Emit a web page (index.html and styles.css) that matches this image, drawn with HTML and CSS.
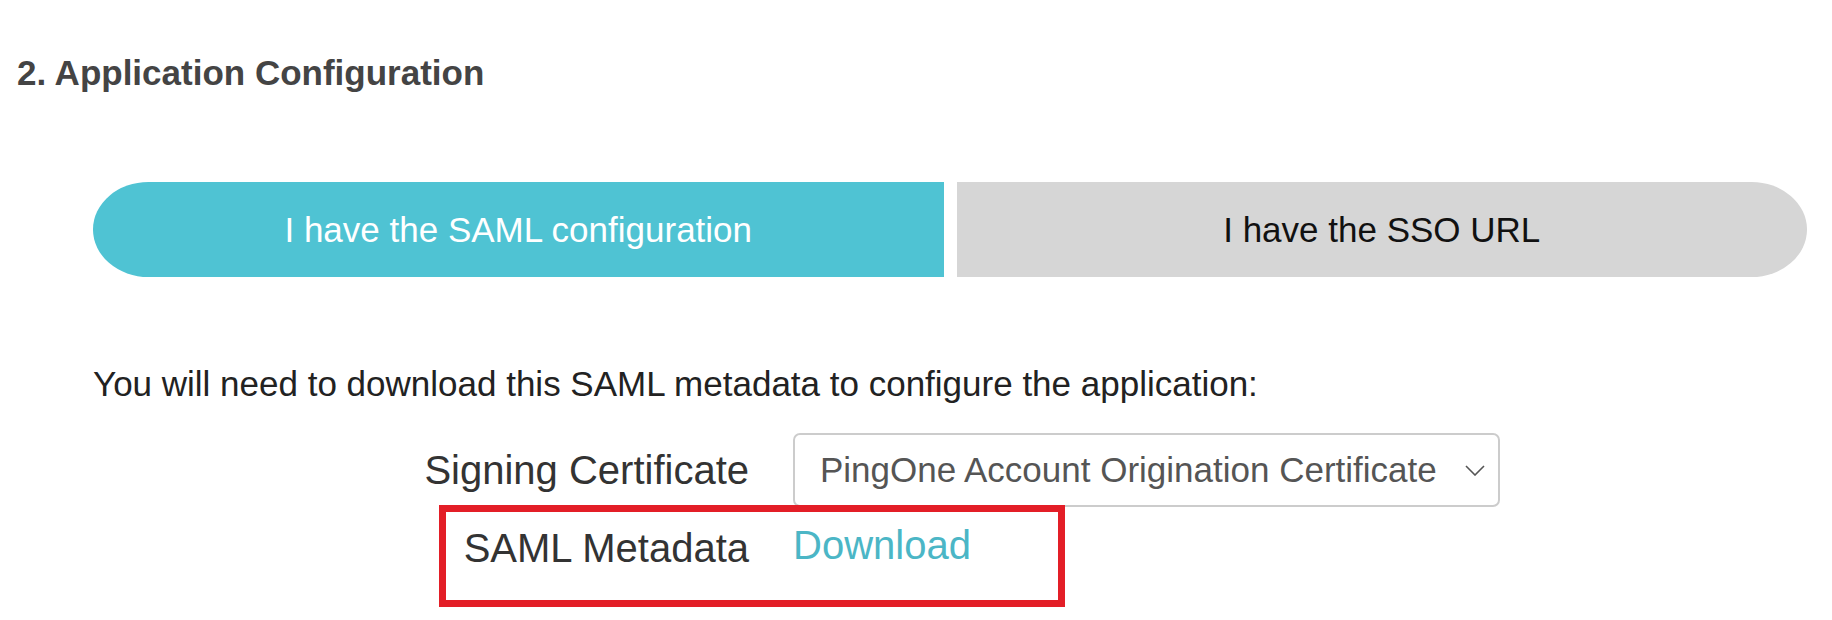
FILE: index.html
```html
<!DOCTYPE html>
<html lang="en">
<head>
    <meta charset="UTF-8">
    <meta name="viewport" content="width=device-width, initial-scale=1.0">
    <title>Application Configuration</title>
    <link rel="stylesheet" href="styles.css">
</head>
<body>
    <h1 class="step-title">2. Application Configuration</h1>

    <div class="config-toggle">
        <button class="toggle-btn toggle-left active">I have the SAML configuration</button>
        <button class="toggle-btn toggle-right">I have the SSO URL</button>
    </div>

    <p class="intro">You will need to download this SAML metadata to configure the application:</p>

    <div class="meta-form">
        <div class="form-label">Signing Certificate</div>
        <div class="fake-select">
            <span>PingOne Account Origination Certificate</span>
            <svg class="chevron" width="20" height="11" viewBox="0 0 20 11">
                <path d="M1 1 L10 10 L19 1" fill="none" stroke="#555" stroke-width="1.6"/>
            </svg>
        </div>

        <div class="form-label row-two">SAML Metadata</div>
        <a class="download-link row-two" href="#">Download</a>

        <div class="highlight-box"></div>
    </div>
</body>
</html>
```

FILE: styles.css
```css
html {
    background-color: #ffffff;
}

body {
    font-family: "Liberation Sans", Arial, sans-serif;
    background-color: #ffffff;
    margin: 0;
    padding: 0;
    min-height: 620px;
}

.step-title {
    font-size: 35px;
    font-weight: bold;
    line-height: 40px;
    color: #444444;
    margin: 53px 0 0 17px;
}

.config-toggle {
    display: flex;
    gap: 13px;
    margin: 89px 25px 0 93px;
}

.toggle-btn {
    flex: 1;
    height: 95px;
    border: none;
    font-family: "Liberation Sans", Arial, sans-serif;
    font-size: 35px;
    background-color: #d6d6d6;
    color: #111111;
    cursor: pointer;
}

.toggle-left {
    border-radius: 56px 0 0 56px / 48px 0 0 48px;
}

.toggle-right {
    border-radius: 0 56px 56px 0 / 0 48px 48px 0;
}

.toggle-btn.active {
    background-color: #4fc3d3;
    color: #ffffff;
}

.intro {
    font-size: 35px;
    line-height: 40px;
    color: #222222;
    margin: 87px 0 0 93px;
}

.meta-form {
    position: relative;
    display: grid;
    grid-template-columns: 656px auto;
    column-gap: 44px;
    align-items: center;
    margin: 29px 0 0 93px;
    padding-bottom: 44px;
}

.form-label {
    font-size: 40px;
    line-height: 46px;
    color: #333333;
    text-align: right;
}

.fake-select {
    width: 707px;
    height: 74px;
    box-sizing: border-box;
    border: 2px solid #cccccc;
    border-radius: 7px;
    display: flex;
    align-items: center;
    justify-content: space-between;
    padding: 0 13px 0 25px;
    font-size: 35px;
    color: #555555;
}

.row-two {
    margin-top: 18px;
}

.download-link {
    font-size: 40px;
    line-height: 46px;
    color: #4bb6c6;
    text-decoration: none;
    justify-self: start;
    position: relative;
    top: -3px;
}

.highlight-box {
    position: absolute;
    left: 346px;
    top: 72px;
    width: 626px;
    height: 102px;
    box-sizing: border-box;
    border: 7px solid #e31e27;
}
```
